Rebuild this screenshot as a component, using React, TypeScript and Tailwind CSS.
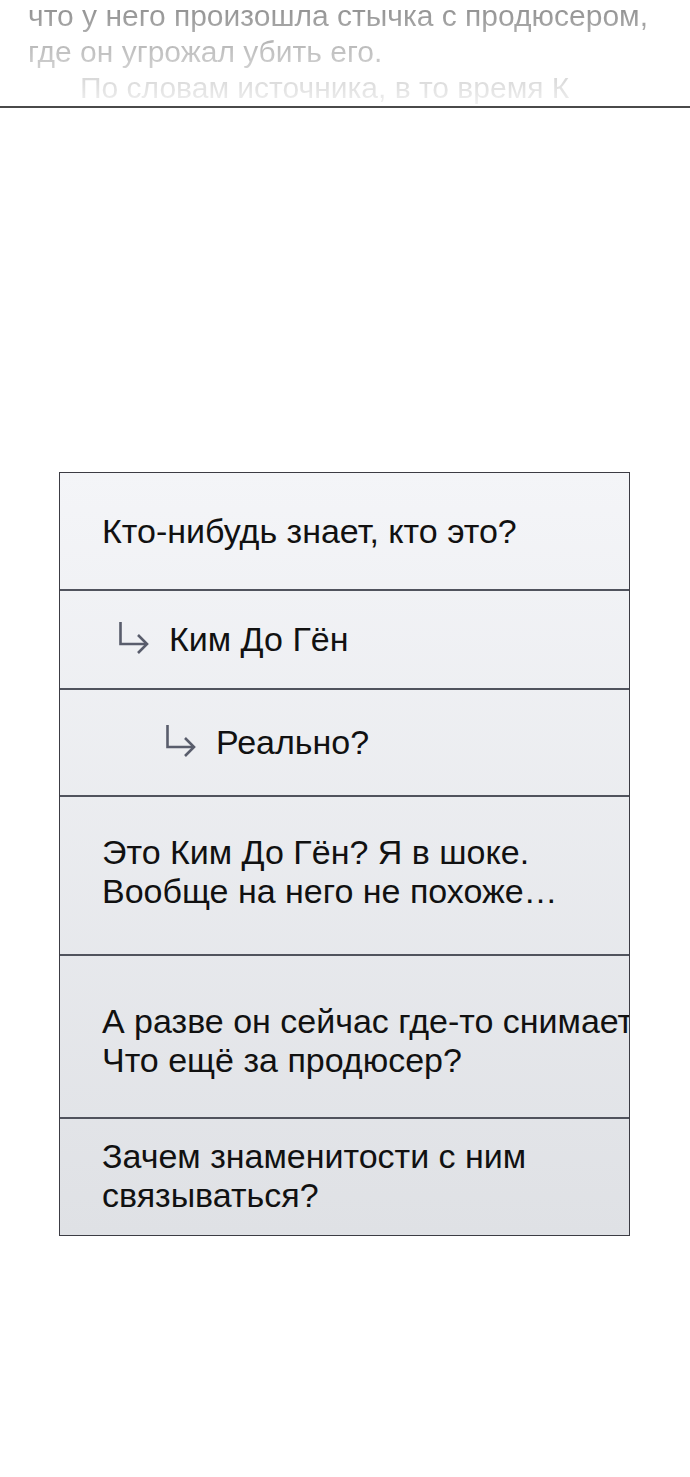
import React from 'react';

function ReplyArrow() {
  return (
    <svg width="32" height="34" viewBox="0 0 32 34" fill="none" className="shrink-0">
      <path d="M2.5 2 V24 H29" stroke="#595d6c" strokeWidth="2.6" />
      <path d="M20 15 L29 24 L20 33" stroke="#595d6c" strokeWidth="2.6" />
    </svg>
  );
}

const rows = [
  { h: 'h-[116px]', pad: 'pl-[42px]', shift: '', lines: ['Кто-нибудь знает, кто это?'], depth: 0 },
  { h: 'h-[99px]', pad: 'pl-[58px]', shift: '', lines: ['Ким До Гён'], depth: 1 },
  { h: 'h-[107px]', pad: 'pl-[105px]', shift: '', lines: ['Реально?'], depth: 2 },
  { h: 'h-[159px]', pad: 'pl-[42px]', shift: '-mt-[8px]', lines: ['Это Ким До Гён? Я в шоке.', 'Вообще на него не похоже…'], depth: 0 },
  { h: 'h-[163px]', pad: 'pl-[42px]', shift: 'mt-[8px]', lines: ['А разве он сейчас где-то снимает?', 'Что ещё за продюсер?'], depth: 0 },
  { h: 'h-[118px]', pad: 'pl-[42px]', shift: '-mt-[2px]', lines: ['Зачем знаменитости с ним', 'связываться?'], depth: 0 },
];

export default function App() {
  return (
    <div className="w-[690px] h-[1477px] bg-white overflow-hidden [font-family:'Liberation_Sans',Arial,sans-serif]">
      {/* faded article text */}
      <div className="h-[106px] overflow-hidden">
        <div className="-mt-[2px] pl-[28px] text-[30px] leading-[36px] bg-gradient-to-b from-[#878787] via-[#c2c2c2] to-[#f2f2f2] bg-clip-text text-transparent whitespace-nowrap">
          <div>что у него произошла стычка с продюсером,</div>
          <div>где он угрожал убить его.</div>
          <div className="pl-[52px]">По словам источника, в то время К</div>
        </div>
      </div>
      <div className="h-[2px] bg-[#4a4a4a]" />

      {/* comments box */}
      <div className="mt-[364px] ml-[59px] w-[571px] border border-[#3c3c44] bg-gradient-to-b from-[#f4f5f8] to-[#dfe1e5] overflow-hidden">
        {rows.map((r, i) => (
          <div
            key={i}
            className={`${r.h} ${r.pad} flex items-center ${i > 0 ? 'border-t-2 border-[#50535d]' : ''}`}
          >
            {r.depth > 0 && (
              <div className="mr-[19px] -mt-[6px]">
                <ReplyArrow />
              </div>
            )}
            <div className={`${r.shift} text-[34px] leading-[39px] text-[#111] whitespace-nowrap`}>
              {r.lines.map((l, j) => (
                <div key={j}>{l}</div>
              ))}
            </div>
          </div>
        ))}
      </div>
    </div>
  );
}
